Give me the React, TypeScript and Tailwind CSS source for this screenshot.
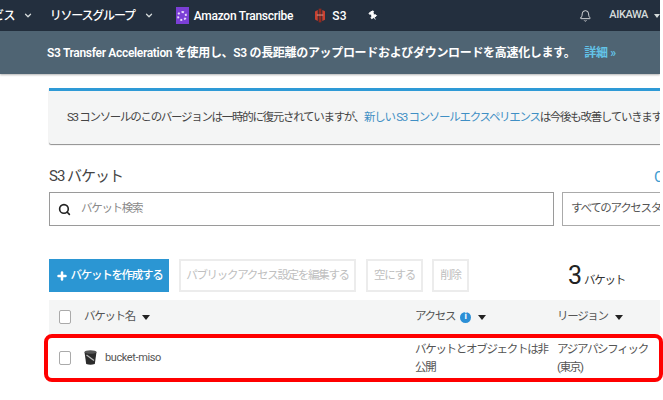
import { Bell, ChevronDown, Pin, Plus, Search } from "lucide-react";

const font = { fontFamily: '"Roboto", "Noto Sans CJK JP", sans-serif' };

function Caret() {
  return <span className="ml-[7px] inline-block h-0 w-0 border-x-[4px] border-t-[5px] border-x-transparent border-t-[#222]" />;
}

function BucketIcon() {
  return (
    <svg width="13" height="15" viewBox="0 0 13 15">
      <path d="M0.5 2 L12.5 2 L10.8 14 Q6.5 15.5 2.2 14 Z" fill="#2b2b2b" />
      <ellipse cx="6.5" cy="2" rx="6" ry="1.8" fill="#555" />
      <path d="M2.5 5 L10 10.5" stroke="#bbb" strokeWidth="1.3" />
    </svg>
  );
}

function GhostButton({ label, className }: { label: string; className: string }) {
  return (
    <button type="button" className={`flex h-[33px] items-center justify-center whitespace-nowrap border-2 border-[#ececec] text-[11.5px] tracking-[-1.3px] text-[#c0c0c0] ${className}`}>
      {label}
    </button>
  );
}

export default function App() {
  return (
    <div className="relative h-[400px] w-[663px] overflow-hidden bg-white" style={font}>
      <div className="h-[400px] w-[660px] overflow-hidden">
        <nav className="flex h-[31px] items-center whitespace-nowrap bg-[#232f3e] text-[12px] font-medium text-white">
          <span className="flex w-[16px] justify-end overflow-hidden tracking-[-0.8px]">サービス</span>
          <ChevronDown size={11} strokeWidth={3} className="ml-[8px] text-[#d5dbdb]" />
          <span className="ml-[17px] tracking-[-1.2px]">リソースグループ</span>
          <ChevronDown size={11} strokeWidth={3} className="ml-[9px] text-[#d5dbdb]" />
          <span className="ml-[22px] flex h-[17px] w-[14px] items-center justify-center bg-[#7b3fd6]">
            <span className="h-[10px] w-[10px] rounded-full border-2 border-dotted border-[#e6d8fa]" />
          </span>
          <span className="ml-[5px] tracking-[-0.25px]">Amazon Transcribe</span>
          <svg width="11" height="15" viewBox="0 0 11 15" className="ml-[22px]">
            <path d="M0 3 L3 1.5 V13.5 L0 12 Z M11 3 L8 1.5 V13.5 L11 12 Z" fill="#c9402f" />
            <path d="M4 0 L7 0 V15 L4 15 Z" fill="#8f2a20" />
            <path d="M2 7 H9" stroke="#e8a090" strokeWidth="1" />
          </svg>
          <span className="ml-[7px]">S3</span>
          <Pin size={11} fill="white" strokeWidth={2} className="ml-[22px] -rotate-30" />
          <Bell size={14} strokeWidth={1.5} className="ml-[200px]" />
          <span className="ml-[18px] text-[11px] tracking-[-0.4px] text-[#d5dbdb]">AIKAWA</span>
          <span className="ml-[6px] h-0 w-0 border-x-[3px] border-t-[4px] border-x-transparent border-t-[#d5dbdb]" />
        </nav>

        <div className="flex h-[43px] items-center whitespace-nowrap bg-[#4f6473] pl-[47px] text-[12px] font-semibold tracking-[-0.32px] text-white shadow-[0_1px_2px_rgba(0,0,0,0.3)]">
          S3 Transfer Acceleration を使用し、S3 の長距離のアップロードおよびダウンロードを高速化します。
          <span className="ml-[9px] text-[#63c3e8]">詳細 »</span>
        </div>

        <main className="pl-[49px]">
          <div className="mt-[14px] flex h-[56px] w-[640px] items-center overflow-hidden whitespace-pre rounded-bl-[2px] border-t-[3px] border-[#2e9ad6] bg-[#f4f5f5] pl-[18px] text-[11.5px] tracking-[-1.3px] text-[#444] shadow-[0_1px_1px_rgba(0,0,0,0.45)]">
            <span>S3 コンソールのこのバージョンは一時的に復元されていますが、</span>
            <span className="text-[#3f8fc4]">新しい S3 コンソールエクスペリエンス</span>
            <span>は今後も改善していきます。</span>
          </div>

          <div className="relative mt-[22px] flex h-[20px] items-center text-[15px] tracking-[-1px] text-[#444]">
            S3 バケット
            <span className="absolute left-[605px] top-0 text-[#3f9bd0]">C</span>
          </div>

          <div className="mt-[6px] flex gap-[8px]">
            <div className="flex h-[34px] w-[505px] shrink-0 items-center border border-[#9a9a9a] pl-[8px] text-[11.5px] tracking-[-1.3px] text-[#8a8a8a]">
              <Search size={13} strokeWidth={3} className="text-[#222]" />
              <span className="ml-[10px]">バケット検索</span>
            </div>
            <div className="flex h-[34px] w-[200px] shrink-0 items-center whitespace-nowrap border border-[#aaa] pl-[8px] text-[11.5px] tracking-[-1.3px] text-[#555]">
              すべてのアクセスタイプ
            </div>
          </div>

          <div className="mt-[33px] flex items-start">
            <button type="button" className="flex h-[33px] w-[120px] items-center justify-center gap-[3px] whitespace-nowrap bg-[#2b96d3] text-[11.5px] font-medium tracking-[-1.3px] text-white">
              <Plus size={12} strokeWidth={5} />
              バケットを作成する
            </button>
            <GhostButton label="パブリックアクセス設定を編集する" className="ml-[10px] w-[177px]" />
            <GhostButton label="空にする" className="ml-[10px] w-[57px]" />
            <GhostButton label="削除" className="ml-[9px] w-[37px]" />
            <div className="ml-[99px] flex items-baseline text-[#333]">
              <span className="text-[25px] leading-[33px] tracking-[-1px] text-[#222]">3</span>
              <span className="ml-[3px] text-[11.5px] tracking-[-1.3px]">バケット</span>
            </div>
          </div>

          <div className="mt-[8px] flex h-[34px] items-center bg-[#f4f5f5] text-[11.5px] tracking-[-1.3px] text-[#555]">
            <span className="ml-[10px] h-[14px] w-[12px] rounded-[2px] border border-[#aaa] bg-white" />
            <span className="ml-[13px] flex w-[331px] items-center">バケット名<Caret /></span>
            <span className="flex w-[142px] items-center">
              アクセス
              <span className="ml-[5px] flex h-[11px] w-[11px] items-center justify-center rounded-full bg-[#2b8fd6] text-[9px] font-bold tracking-normal text-white">i</span>
              <Caret />
            </span>
            <span className="flex items-center">リージョン<Caret /></span>
          </div>

          <div className="flex h-[47px] items-center text-[11.5px] leading-[18px] tracking-[-1.3px] text-[#555]">
            <span className="ml-[10px] h-[14px] w-[12px] rounded-[2px] border border-[#aaa] bg-white" />
            <span className="ml-[13px] flex w-[331px] items-center">
              <BucketIcon />
              <span className="ml-[8px] text-[11px] tracking-[-0.4px]">bucket-miso</span>
            </span>
            <span className="w-[142px] pr-[8px]">バケットとオブジェクトは非公開</span>
            <span className="w-[100px]">アジアパシフィック (東京)</span>
          </div>
        </main>
      </div>

      <div className="absolute left-[44px] top-[334px] h-[48px] w-[619px] rounded-[8px] border-[4px] border-[#f00]" />
    </div>
  );
}
